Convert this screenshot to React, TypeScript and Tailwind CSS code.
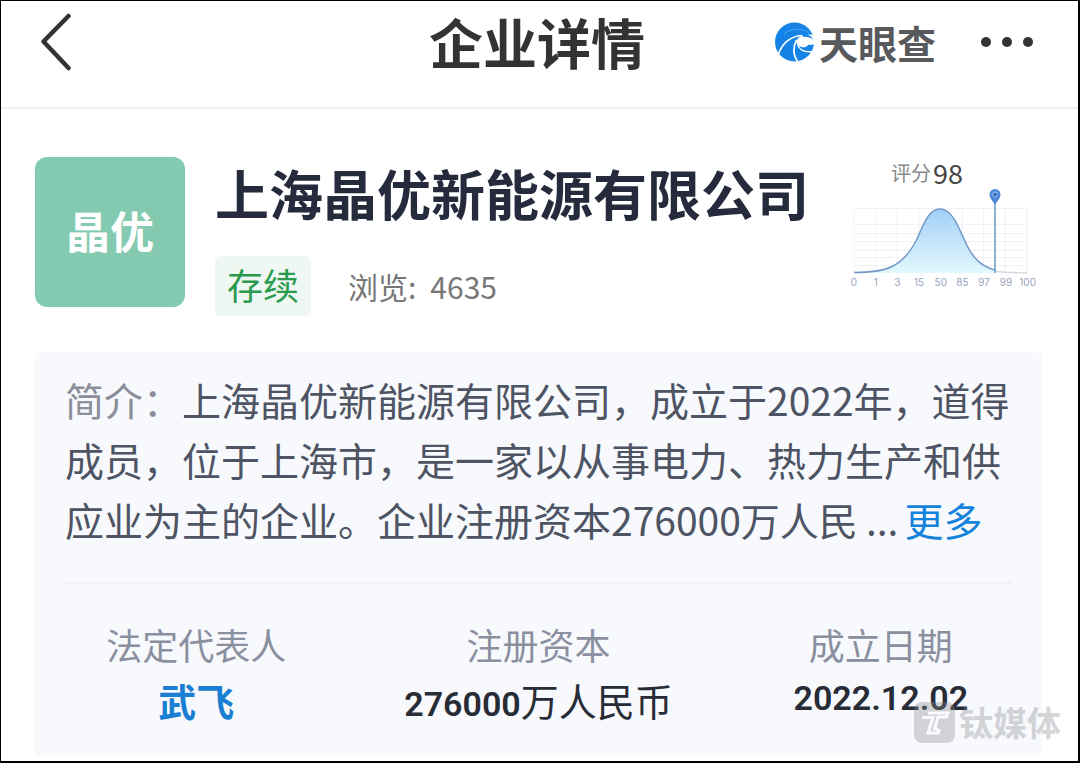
const ticks = ['0', '1', '3', '15', '50', '85', '97', '99', '100']

function BackIcon() {
  return (
    <svg width="32" height="58" viewBox="0 0 32 58" fill="none" stroke="#333" strokeWidth="4.5" strokeLinecap="round" strokeLinejoin="round">
      <path d="M28.5 3 3.5 28.5 28.5 55" />
    </svg>
  )
}

function Logo() {
  return (
    <a href="#" className="flex items-center gap-1 text-[#58595c]">
      <svg width="40" height="40" viewBox="0 0 40 40" aria-hidden="true">
        <circle cx="19.5" cy="20" r="19.5" fill="#1583e6" />
        {/* eye of the wave, open to the right */}
        <path d="M40 14C36 12 30 12 25.500 14.500C20.500 17 20.500 22 24 24C28 26 31 26 33.500 23L40 23Z" fill="#fff" />
        <path d="M26 12.500C31 11 36 13 38.300 17.500C35 15.500 32 14.500 29 15Z" fill="#1583e6" />
        <path d="M38.900 22C37 28 29 29 24.500 25.500C28 26.500 32 26 33.500 22.500C35 23.500 37 23 38.900 22Z" fill="#1583e6" />
        <path d="M27 13.500C15 14 7 22 3.500 32" fill="none" stroke="#fff" strokeWidth="1.700" />
        <path d="M21.500 18C17.500 26 18 33 22.500 39.500" fill="none" stroke="#fff" strokeWidth="1.700" />
        <path d="M22.500 23C25 28 30 30.500 37 29.500" fill="none" stroke="#fff" strokeWidth="1.400" />
        <path d="M9 12C17 6 27 6 34 10.500" fill="none" stroke="#4ba3f0" strokeWidth="1" />
      </svg>
      <span className="text-[39px] leading-[40px] font-bold">天眼查</span>
    </a>
  )
}

function MoreIcon() {
  return (
    <svg width="54" height="12" viewBox="0 0 54 12" fill="#333">
      <circle cx="6" cy="6" r="5" />
      <circle cx="27" cy="6" r="5" />
      <circle cx="48" cy="6" r="5" />
    </svg>
  )
}

function ScoreChart() {
  return (
    <svg width="190" height="102" viewBox="0 4 190 102" role="img" aria-label="评分分布">
      <defs>
        <linearGradient id="bell" x1="0" y1="0" x2="0" y2="1">
          <stop offset="0" stopColor="#a3cff8" />
          <stop offset="1" stopColor="#e2f8fd" />
        </linearGradient>
      </defs>
      <g stroke="#f0f1f4" strokeWidth="1" fill="none">
        {[23, 39, 48, 56, 65, 72, 80].map((y) => (
          <path key={y} d={`M4 ${y}.5H177`} />
        ))}
        {ticks.map((t, i) => (
          <path key={t} d={`M${4 + i * 21.6} 23V87`} />
        ))}
      </g>
      <path d="M4 87.500C34 87.500 52 84 67 54C74 38 79 24 90 24S107 38 114 54C123 76 134 82 145 85V88H4Z" fill="url(#bell)" />
      <path d="M4 87.500C34 87.500 52 84 67 54C74 38 79 24 90 24S107 38 114 54C123 76 134 82 145 85" fill="none" stroke="#7199c6" strokeWidth="1.500" />
      <path d="M145 86.500Q155 87.500 177 88" fill="none" stroke="#d5d8dc" strokeWidth="1.300" />
      <path d="M145 18V88" stroke="#7199c6" strokeWidth="1.600" />
      <path d="M145 20c-2-4-5.500-6.500-5.500-10.500a5.500 5.500 0 0 1 11 0c0 4-3.500 6.500-5.500 10.500z" fill="#4f87d6" />
      <circle cx="145" cy="9.500" r="2.500" fill="#3a70c4" stroke="#9cc0ef" strokeWidth="1" />
      <g fill="#9aa2bd" fontSize="10" textAnchor="middle" fontFamily="Inter, sans-serif">
        {ticks.map((t, i) => (
          <text key={t} x={4 + i * 21.7} y="101">
            {t}
          </text>
        ))}
      </g>
    </svg>
  )
}

function Header() {
  return (
    <header className="grid grid-cols-[1fr_auto_1fr] items-center border-b-2 border-[#eeeeee] pr-[44px] pb-[24px] pl-[39px]">
      <button type="button" aria-label="返回" className="justify-self-start">
        <BackIcon />
      </button>
      <h1 className="text-[54px] leading-[82px] font-bold text-[#333333]">企业详情</h1>
      <div className="flex items-center gap-11 justify-self-end">
        <Logo />
        <button type="button" aria-label="更多操作">
          <MoreIcon />
        </button>
      </div>
    </header>
  )
}

function Company() {
  return (
    <section className="flex items-start pr-[38px] pl-[34px]">
      <div className="flex size-[150px] shrink-0 items-center justify-center rounded-xl bg-[#84cab0] pb-1 text-[44px] font-bold text-white">
        晶优
      </div>
      <div className="ml-[30px] min-w-0 flex-1">
        <h2 className="text-[54px] leading-[72px] font-bold whitespace-nowrap text-[#252b3d]">上海晶优新能源有限公司</h2>
        <div className="mt-[27px] flex items-center gap-[37px]">
          <span className="rounded-md bg-[#eef7f2] px-3 pb-1 text-[36px] leading-[56px] text-[#2a9a4e]">存续</span>
          <span className="flex gap-3.5 text-[30px] text-[#777777]">
            <span>浏览:</span>
            <span>4635</span>
          </span>
        </div>
      </div>
      <div className="flex w-[190px] shrink-0 flex-col">
        <p className="flex items-center justify-center gap-0.5 pr-[36px] text-[20px] leading-[32px] text-[#888888]">
          评分<span className="text-[27px] text-[#444444]">98</span>
        </p>
        <ScoreChart />
      </div>
    </section>
  )
}

function Profile() {
  return (
    <section className="mr-[36px] ml-[34px] mt-9 rounded-md bg-[#f7f9fd] px-[30px] pt-[17px] pb-[28px]">
      <p className="text-[39px] leading-[60px] text-[#4e5463]">
        <span className="text-[#8c8f9a]">简介：</span>
        上海晶优新能源有限公司，成立于2022年，道得成员，位于上海市，是一家以从事电力、热力生产和供应业为主的企业。企业注册资本276000万人民
        <span className="pr-1.5 pl-2">...</span>
        <a href="#" className="text-[#1583dc]">
          更多
        </a>
      </p>
      <hr className="mt-[33px] border-t-2 border-[#eff1f5]" />
      <dl className="-mx-10 mt-8 grid grid-cols-3 text-center">
        <div>
          <dt className="text-[36px] leading-[56px] text-[#8b90a0]">法定代表人</dt>
          <dd className="text-[38px] leading-[56px] font-bold">
            <a href="#" className="text-[#1a7fd2]">
              武飞
            </a>
          </dd>
        </div>
        <div>
          <dt className="text-[36px] leading-[56px] text-[#8b90a0]">注册资本</dt>
          <dd className="text-[38px] leading-[56px] text-[#282c36]">
            <span className="font-[Roboto,sans-serif] text-[34px] leading-none font-semibold">276000</span>万人民币
          </dd>
        </div>
        <div>
          <dt className="text-[36px] leading-[56px] text-[#8b90a0]">成立日期</dt>
          <dd className="font-[Roboto,sans-serif] text-[34px] leading-[52px] font-semibold text-[#282c36]">2022.12.02</dd>
        </div>
      </dl>
    </section>
  )
}

function Watermark() {
  return (
    <div className="pointer-events-none absolute right-[17px] bottom-[17px] flex items-center gap-1 text-[#8a8c90] opacity-35">
      <svg width="41" height="41" viewBox="0 0 41 41" aria-hidden="true">
        <rect width="41" height="41" rx="8" fill="currentColor" />
        <path d="M14 11H34L32.500 15H24L20.500 27H24" fill="none" stroke="#fff" strokeWidth="3" />
        <path d="M8 15.500H19L14 31H24L25.500 27" fill="none" stroke="#fff" strokeWidth="3" />
      </svg>
      <span className="text-[34px] leading-[44px] font-bold">钛媒体</span>
    </div>
  )
}

export default function App() {
  return (
    <div className="relative min-h-screen border-t border-r-2 border-b-2 border-l border-black bg-white pb-[5px] font-['Noto_Sans_CJK_SC',sans-serif]">
      <Header />
      <main className="pt-12">
        <Company />
        <Profile />
      </main>
      <Watermark />
    </div>
  )
}
